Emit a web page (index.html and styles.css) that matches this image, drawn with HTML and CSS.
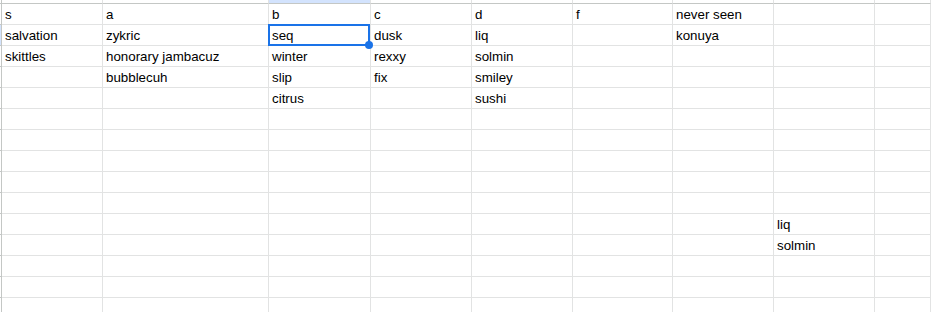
FILE: index.html
```html
<!DOCTYPE html>
<html>
<head>
<meta charset="utf-8">
<link rel="stylesheet" href="styles.css">
</head>
<body>
<div class="sheet">
  <div class="row head">
    <div class="rh"></div><div class="c"></div><div class="c"></div><div class="c sel-col"></div><div class="c"></div><div class="c"></div><div class="c"></div><div class="c"></div><div class="c"></div><div class="c"></div>
  </div>
  <div class="row">
    <div class="rh"></div><div class="c">s</div><div class="c">a</div><div class="c">b</div><div class="c">c</div><div class="c">d</div><div class="c">f</div><div class="c">never seen</div><div class="c"></div><div class="c"></div>
  </div>
  <div class="row">
    <div class="rh sel-row"></div><div class="c">salvation</div><div class="c">zykric</div><div class="c active">seq<span class="selection"><span class="handle"></span></span></div><div class="c">dusk</div><div class="c">liq</div><div class="c"></div><div class="c">konuya</div><div class="c"></div><div class="c"></div>
  </div>
  <div class="row">
    <div class="rh"></div><div class="c">skittles</div><div class="c">honorary jambacuz</div><div class="c">winter</div><div class="c">rexxy</div><div class="c">solmin</div><div class="c"></div><div class="c"></div><div class="c"></div><div class="c"></div>
  </div>
  <div class="row">
    <div class="rh"></div><div class="c"></div><div class="c">bubblecuh</div><div class="c">slip</div><div class="c">fix</div><div class="c">smiley</div><div class="c"></div><div class="c"></div><div class="c"></div><div class="c"></div>
  </div>
  <div class="row">
    <div class="rh"></div><div class="c"></div><div class="c"></div><div class="c">citrus</div><div class="c"></div><div class="c">sushi</div><div class="c"></div><div class="c"></div><div class="c"></div><div class="c"></div>
  </div>
  <div class="row">
    <div class="rh"></div><div class="c"></div><div class="c"></div><div class="c"></div><div class="c"></div><div class="c"></div><div class="c"></div><div class="c"></div><div class="c"></div><div class="c"></div>
  </div>
  <div class="row">
    <div class="rh"></div><div class="c"></div><div class="c"></div><div class="c"></div><div class="c"></div><div class="c"></div><div class="c"></div><div class="c"></div><div class="c"></div><div class="c"></div>
  </div>
  <div class="row">
    <div class="rh"></div><div class="c"></div><div class="c"></div><div class="c"></div><div class="c"></div><div class="c"></div><div class="c"></div><div class="c"></div><div class="c"></div><div class="c"></div>
  </div>
  <div class="row">
    <div class="rh"></div><div class="c"></div><div class="c"></div><div class="c"></div><div class="c"></div><div class="c"></div><div class="c"></div><div class="c"></div><div class="c"></div><div class="c"></div>
  </div>
  <div class="row">
    <div class="rh"></div><div class="c"></div><div class="c"></div><div class="c"></div><div class="c"></div><div class="c"></div><div class="c"></div><div class="c"></div><div class="c"></div><div class="c"></div>
  </div>
  <div class="row">
    <div class="rh"></div><div class="c"></div><div class="c"></div><div class="c"></div><div class="c"></div><div class="c"></div><div class="c"></div><div class="c"></div><div class="c">liq</div><div class="c"></div>
  </div>
  <div class="row">
    <div class="rh"></div><div class="c"></div><div class="c"></div><div class="c"></div><div class="c"></div><div class="c"></div><div class="c"></div><div class="c"></div><div class="c">solmin</div><div class="c"></div>
  </div>
  <div class="row">
    <div class="rh"></div><div class="c"></div><div class="c"></div><div class="c"></div><div class="c"></div><div class="c"></div><div class="c"></div><div class="c"></div><div class="c"></div><div class="c"></div>
  </div>
  <div class="row">
    <div class="rh"></div><div class="c"></div><div class="c"></div><div class="c"></div><div class="c"></div><div class="c"></div><div class="c"></div><div class="c"></div><div class="c"></div><div class="c"></div>
  </div>
  <div class="row">
    <div class="rh"></div><div class="c"></div><div class="c"></div><div class="c"></div><div class="c"></div><div class="c"></div><div class="c"></div><div class="c"></div><div class="c"></div><div class="c"></div>
  </div>
</div>
</body>
</html>
```
FILE: styles.css
```css
html, body {
  margin: 0;
  padding: 0;
  background: #ffffff;
  overflow: hidden;
}
.sheet {
  width: 931px;
  height: 312px;
  overflow: hidden;
  font-family: "Liberation Sans", Arial, sans-serif;
  font-size: 13.33px;
  color: #000000;
}
.row {
  display: grid;
  grid-template-columns: 2px 101px 166px 102px 101px 101px 100px 101px 101px 1fr;
  height: 21px;
}
.row.head {
  height: 4px;
}
.rh, .c {
  box-sizing: border-box;
  border-bottom: 1px solid #e2e3e3;
}
.rh {
  border-right: 1px solid #c4c7c5;
  border-bottom-color: #c4c7c5;
}
.c {
  border-right: 1px solid #e2e3e3;
  padding: 1px 3px 0 3px;
  line-height: 19px;
  white-space: nowrap;
  overflow: visible;
  position: relative;
}
.head .c, .head .rh {
  border-bottom: 1px solid #c4c7c5;
  padding: 0;
}
.sel-col, .sel-row {
  background: #d3e3fd;
}
.selection {
  position: absolute;
  left: -1px;
  top: -1px;
  width: 102px;
  height: 22px;
  box-sizing: border-box;
  border: 2px solid #1a73e8;
  z-index: 2;
}
.handle {
  position: absolute;
  right: -5px;
  bottom: -5px;
  width: 8px;
  height: 8px;
  border-radius: 50%;
  background: #1a73e8;
}
```
